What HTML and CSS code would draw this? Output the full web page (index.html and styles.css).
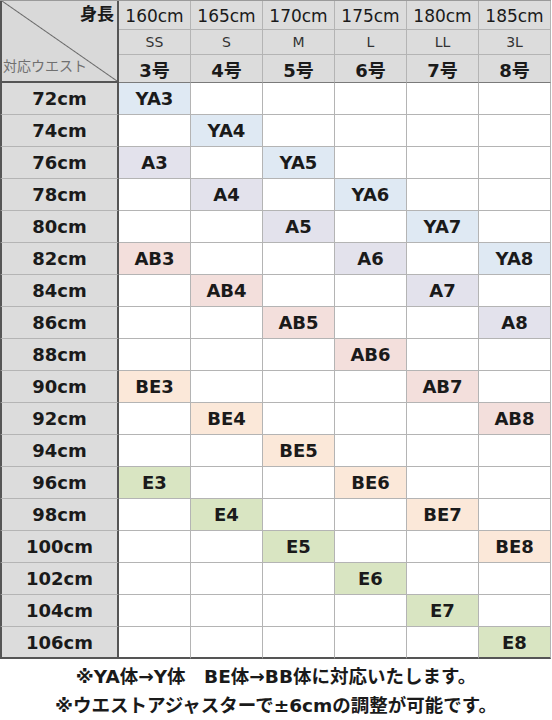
FILE: index.html
```html
<!DOCTYPE html>
<html lang="ja">
<head>
    <meta charset="UTF-8">
    <meta name="viewport" content="width=device-width, initial-scale=1.0">
    <title>サイズ対応表</title>
    <link rel="stylesheet" href="styles.css">
</head>
<body>
    <div class="chart" id="chart">
        <div class="cell corner">
            <span class="corner-top">身長</span>
            <span class="corner-bottom">対応ウエスト</span>
        </div>
        <div class="cell head height">160cm</div>
        <div class="cell head height">165cm</div>
        <div class="cell head height">170cm</div>
        <div class="cell head height">175cm</div>
        <div class="cell head height">180cm</div>
        <div class="cell head height">185cm</div>
        <div class="cell head letter">SS</div>
        <div class="cell head letter">S</div>
        <div class="cell head letter">M</div>
        <div class="cell head letter">L</div>
        <div class="cell head letter">LL</div>
        <div class="cell head letter">3L</div>
        <div class="cell head number">3号</div>
        <div class="cell head number">4号</div>
        <div class="cell head number">5号</div>
        <div class="cell head number">6号</div>
        <div class="cell head number">7号</div>
        <div class="cell head number">8号</div>
    </div>

    <div class="notes">
        <p>※YA体→Y体　BE体→BB体に対応いたします。</p>
        <p>※ウエストアジャスターで±6cmの調整が可能です。</p>
    </div>

    <script>
        // waist -> { column index : size }
        const rows = [
            [72, { 1: 'YA3' }],
            [74, { 2: 'YA4' }],
            [76, { 1: 'A3', 3: 'YA5' }],
            [78, { 2: 'A4', 4: 'YA6' }],
            [80, { 3: 'A5', 5: 'YA7' }],
            [82, { 1: 'AB3', 4: 'A6', 6: 'YA8' }],
            [84, { 2: 'AB4', 5: 'A7' }],
            [86, { 3: 'AB5', 6: 'A8' }],
            [88, { 4: 'AB6' }],
            [90, { 1: 'BE3', 5: 'AB7' }],
            [92, { 2: 'BE4', 6: 'AB8' }],
            [94, { 3: 'BE5' }],
            [96, { 1: 'E3', 4: 'BE6' }],
            [98, { 2: 'E4', 5: 'BE7' }],
            [100, { 3: 'E5', 6: 'BE8' }],
            [102, { 4: 'E6' }],
            [104, { 5: 'E7' }],
            [106, { 6: 'E8' }]
        ];

        const chart = document.getElementById("chart");

        rows.forEach((row, index) => {
            const last = index === rows.length - 1;
            const label = document.createElement("div");
            label.className = "cell waist" + (last ? " last" : "");
            label.textContent = row[0] + "cm";
            chart.appendChild(label);

            for (let col = 1; col <= 6; col++) {
                const size = row[1][col] || "";
                const cell = document.createElement("div");
                cell.className = "cell data" + (last ? " last" : "");
                if (size) {
                    cell.classList.add("type-" + size.replace(/[0-9]/g, "").toLowerCase());
                }
                cell.textContent = size;
                chart.appendChild(cell);
            }
        });
    </script>
</body>
</html>
```

FILE: styles.css
```css
body {
    margin: 0;
    padding: 0;
    background-color: #ffffff;
    font-family: "DejaVu Sans", "Noto Sans CJK JP", sans-serif;
    color: #1a1a1a;
}
.chart {
    display: grid;
    grid-template-columns: 119px repeat(6, 72px);
    grid-template-rows: 29px 25px 28px repeat(18, 32px);
    width: 551px;
    border-top: 1px solid #9a9a9a;
    box-sizing: border-box;
}
.cell {
    display: flex;
    align-items: center;
    justify-content: center;
    box-sizing: border-box;
    border-right: 1px solid #b4b4b4;
    border-bottom: 1px solid #b4b4b4;
}
.corner {
    grid-row: 1 / 4;
    flex-direction: column;
    align-items: stretch;
    justify-content: space-between;
    background: linear-gradient(to top right, #d9d9d9 calc(50% - 1px), #6a6a6a 50%, #d9d9d9 calc(50% + 1px));
    border-left: 2px solid #555555;
    border-right: 2px solid #555555;
    border-bottom: 2px solid #555555;
    padding: 1px 3px 6px 1px;
}
.corner-top {
    align-self: flex-end;
    font-weight: bold;
    font-size: 17px;
    line-height: 24px;
}
.corner-bottom {
    align-self: flex-start;
    font-size: 14px;
    color: #707070;
}
.head {
    background-color: #dcdcdc;
}
.height {
    font-size: 17px;
    padding-top: 2px;
}
.letter {
    font-size: 14px;
    color: #333333;
}
.number {
    font-size: 18px;
    font-weight: bold;
    border-bottom: 1px solid #7a7a7a;
}
.waist {
    background-color: #dcdcdc;
    border-left: 2px solid #555555;
    border-right: 2px solid #555555;
    font-size: 18px;
    font-weight: bold;
}
.data {
    font-size: 18px;
    font-weight: bold;
}
.last {
    border-bottom: 2px solid #555555;
}
.type-ya {
    background-color: #dfe9f3;
}
.type-a {
    background-color: #e3e2ec;
}
.type-ab {
    background-color: #f3dfdc;
}
.type-be {
    background-color: #fbe8d9;
}
.type-e {
    background-color: #d9e5c2;
}
.notes {
    padding-top: 3px;
    text-align: center;
    font-size: 18.5px;
    font-weight: bold;
}
.notes p {
    margin: 0;
    line-height: 29px;
}
```
